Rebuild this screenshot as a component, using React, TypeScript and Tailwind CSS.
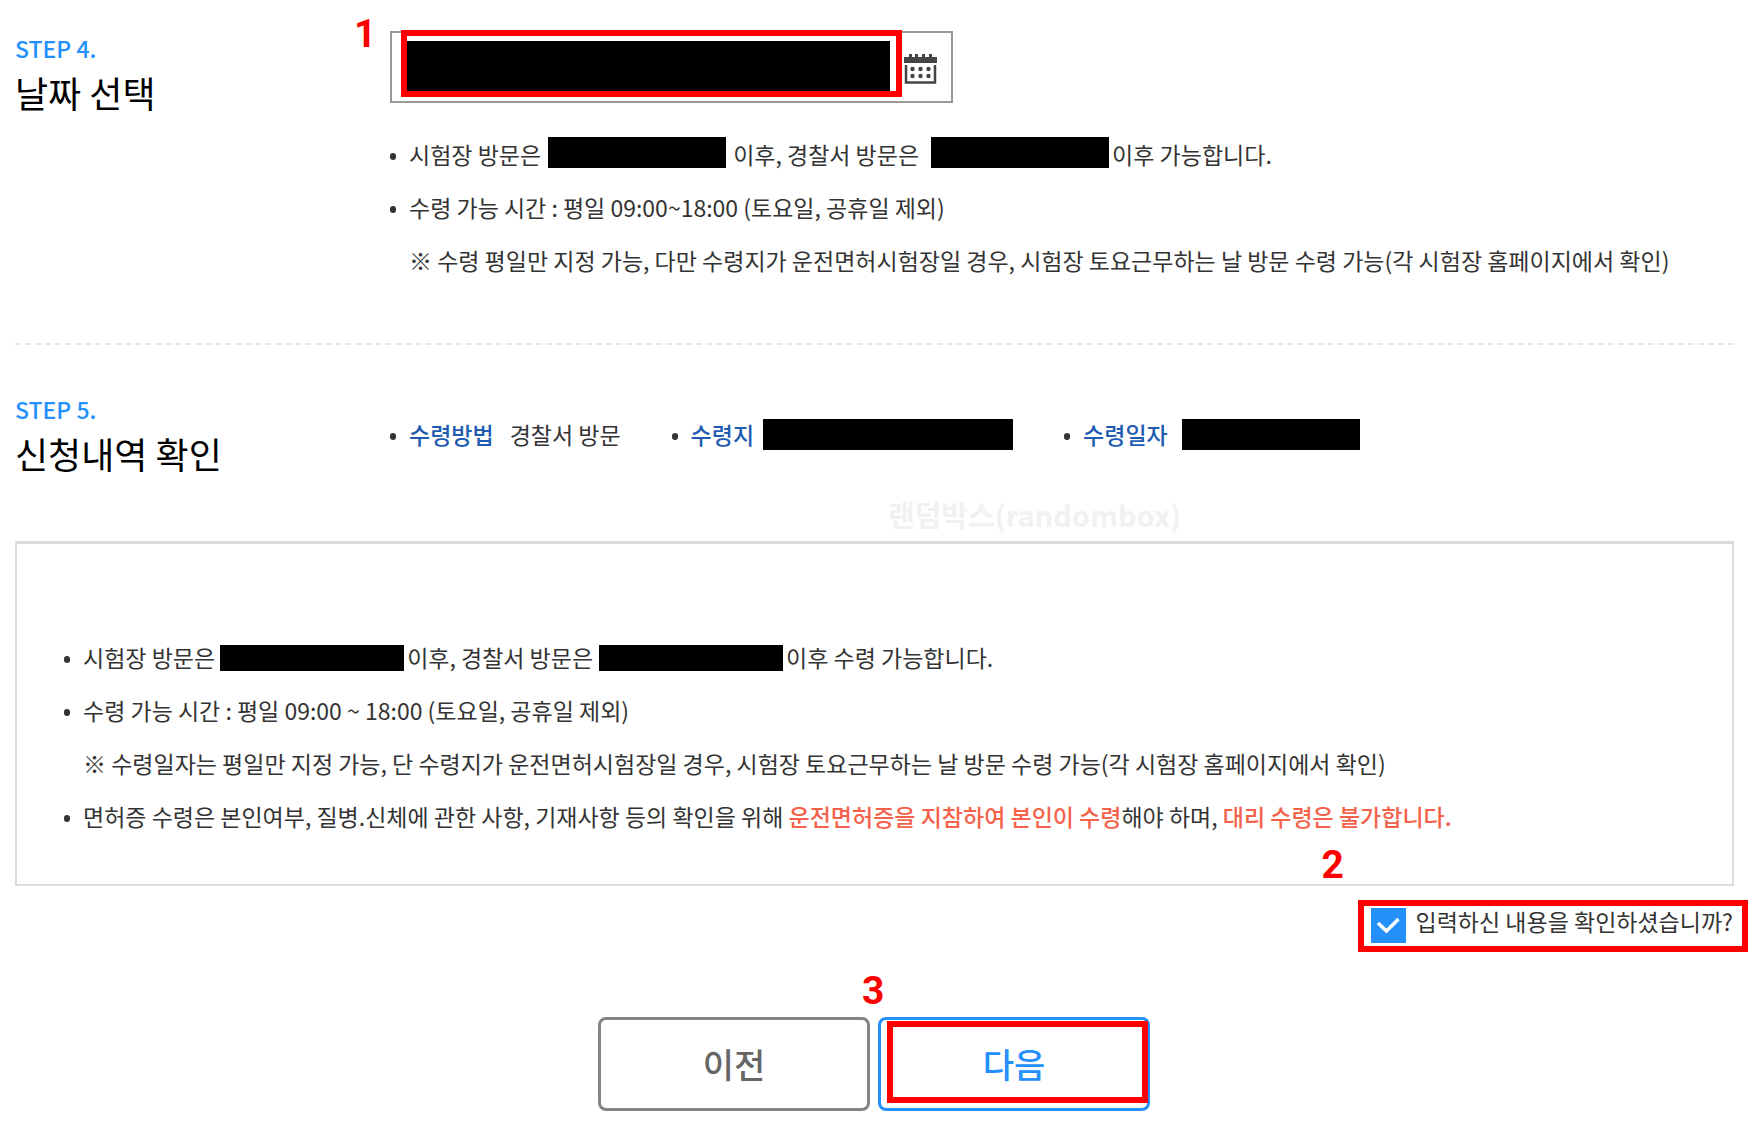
import React, { useState } from "react";

function Redacted({ className }: { className: string }) {
  return <span className={`block shrink-0 bg-black ${className}`} />;
}

function Marker({ value, className }: { value: string; className: string }) {
  return (
    <span
      className={`absolute font-[Roboto,sans-serif] text-[39px] leading-[38px] font-bold text-[#ff0000] ${className}`}
    >
      {value}
    </span>
  );
}

function Row({ children }: { children: React.ReactNode }) {
  return (
    <li className="flex items-center whitespace-nowrap">
      <span className="mt-[3px] mr-[13px] h-[7px] w-[6px] shrink-0 rounded-full bg-[#333]" />
      {children}
    </li>
  );
}

function StepTitle({ step, title }: { step: string; title: string }) {
  return (
    <div>
      <p className="text-[23px] leading-9 font-medium text-[#2490fb]">{step}</p>
      <h2 className="text-[36px] leading-[52px] text-black">{title}</h2>
    </div>
  );
}

function CalendarIcon() {
  return (
    <svg width="33" height="31" viewBox="0 0 33 31" fill="#444">
      <path d="M0 3h5V0h3v3h3V0h3v3h4V0h3v3h4V0h3v3h5v6H0z" />
      <path d="M2 11v17.5h29V11" fill="none" stroke="#444" strokeWidth="2.5" />
      <circle cx="8.5" cy="15" r="2.2" />
      <circle cx="16.5" cy="15" r="2.2" />
      <circle cx="24.5" cy="15" r="2.2" />
      <circle cx="8.5" cy="22" r="2.2" />
      <circle cx="16.5" cy="22" r="2.2" />
      <circle cx="24.5" cy="22" r="2.2" />
    </svg>
  );
}

export default function App() {
  const [date, setDate] = useState("");
  const [confirmed, setConfirmed] = useState(true);

  return (
    <main className="bg-white pb-3 font-['Noto_Sans_CJK_KR',sans-serif] text-[23px] leading-[53px] text-[#333]">
      <section className="mr-[14px] ml-[15px] grid grid-cols-[375px_1fr] border-b-2 border-dashed border-[#e6e6e6] pt-[30px] pb-14">
        <StepTitle step="STEP 4." title="날짜 선택" />
        <div>
          <div className="relative mt-px mb-[25px] flex h-[72px] w-[563px] items-center border-2 border-[#999]">
            <input
              type="text"
              aria-label="날짜 선택"
              className="h-full min-w-0 flex-1 px-4 outline-none"
              value={date}
              onChange={(e) => setDate(e.target.value)}
            />
            <button type="button" aria-label="달력" className="mt-[5px] mr-[14px]">
              <CalendarIcon />
            </button>
            <span className="absolute -top-[3px] left-[9px] h-[67px] w-[501px] border-6 border-[#ff0000] pt-[5px]">
              <Redacted className="h-[50px] w-[483px]" />
            </span>
            <Marker value="1" className="-top-[18px] -left-[38px]" />
          </div>
          <ul>
            <Row>
              시험장 방문은
              <Redacted className="mr-[7px] mb-1 ml-[7px] h-[31px] w-[178px]" />
              이후, 경찰서 방문은
              <Redacted className="mr-[3px] mb-1 ml-3 h-[31px] w-[178px]" />
              이후 가능합니다.
            </Row>
            <Row>수령 가능 시간 : 평일 09:00~18:00 (토요일, 공휴일 제외)</Row>
            <li className="pl-[19px] whitespace-nowrap">
              ※ 수령 평일만 지정 가능, 다만 수령지가 운전면허시험장일 경우, 시험장
              토요근무하는 날 방문 수령 가능(각 시험장 홈페이지에서 확인)
            </li>
          </ul>
        </div>
      </section>

      <section className="mr-[14px] ml-[15px] grid grid-cols-[375px_1fr] pt-[46px]">
        <StepTitle step="STEP 5." title="신청내역 확인" />
        <ul className="flex items-start gap-[51px] pt-[17px]">
          <Row>
            <strong className="font-medium text-[#1f5bb0]">수령방법</strong>
            <span className="ml-4">경찰서 방문</span>
          </Row>
          <Row>
            <strong className="font-medium text-[#1f5bb0]">수령지</strong>
            <Redacted className="ml-[9px] h-[31px] w-[250px]" />
          </Row>
          <Row>
            <strong className="font-medium text-[#1f5bb0]">수령일자</strong>
            <Redacted className="ml-[14px] h-[31px] w-[178px]" />
          </Row>
        </ul>
      </section>

      <p className="pt-2 pl-[888px] text-[29px] leading-[54px] font-bold text-[#f1f1f1]">
        랜덤박스(randombox)
      </p>

      <section className="relative mr-[14px] ml-[15px] border-2 border-t-3 border-[#dcdcdc] pt-[87px] pb-[41px] pl-[47px]">
        <ul>
          <Row>
            시험장 방문은
            <Redacted className="mr-[3px] ml-[5px] h-[26px] w-[184px]" />
            이후, 경찰서 방문은
            <Redacted className="mr-[3px] ml-[6px] h-[26px] w-[184px]" />
            이후 수령 가능합니다.
          </Row>
          <Row>수령 가능 시간 : 평일 09:00 ~ 18:00 (토요일, 공휴일 제외)</Row>
          <li className="pl-[19px] whitespace-nowrap">
            ※ 수령일자는 평일만 지정 가능, 단 수령지가 운전면허시험장일 경우, 시험장
            토요근무하는 날 방문 수령 가능(각 시험장 홈페이지에서 확인)
          </li>
          <Row>
            <span>
              면허증 수령은 본인여부, 질병.신체에 관한 사항, 기재사항 등의 확인을 위해{" "}
              <strong className="font-medium text-[#f5624b]">
                운전면허증을 지참하여 본인이 수령
              </strong>
              해야 하며,{" "}
              <strong className="font-medium text-[#f5624b]">
                대리 수령은 불가합니다.
              </strong>
            </span>
          </Row>
        </ul>
        <Marker value="2" className="right-[388px] bottom-0" />
      </section>

      <label className="mt-[14px] ml-auto flex h-[52px] w-fit items-start border-6 border-[#ff0000] pr-[9px] pl-[7px] leading-[30px]">
        <span className="relative mt-[2px] mr-[10px] block size-[35px]">
          <input
            type="checkbox"
            className="block size-full appearance-none border border-[#2490fb] checked:bg-[#2490fb]"
            checked={confirmed}
            onChange={(e) => setConfirmed(e.target.checked)}
          />
          <svg
            className="pointer-events-none absolute inset-0"
            viewBox="0 0 35 35"
            fill="none"
            stroke="#fff"
            strokeWidth="3.5"
          >
            <path d="M7 15l8.5 8L27.5 11" />
          </svg>
        </span>
        입력하신 내용을 확인하셨습니까?
      </label>

      <div className="mt-[65px] flex justify-center gap-2">
        <button
          type="button"
          className="h-[94px] w-[272px] rounded-lg border-3 border-[#858585] pb-[2px] text-[34px] font-medium text-[#666]"
        >
          이전
        </button>
        <div className="relative">
          <button
            type="button"
            className="h-[94px] w-[272px] rounded-lg border-3 border-[#2490fb] pb-[2px] text-[34px] font-medium text-[#2490fb]"
          >
            다음
          </button>
          <span className="pointer-events-none absolute top-1 left-[9px] h-[82px] w-[261px] border-6 border-[#ff0000]" />
          <Marker value="3" className="-top-[45px] -left-4" />
        </div>
      </div>
    </main>
  );
}
